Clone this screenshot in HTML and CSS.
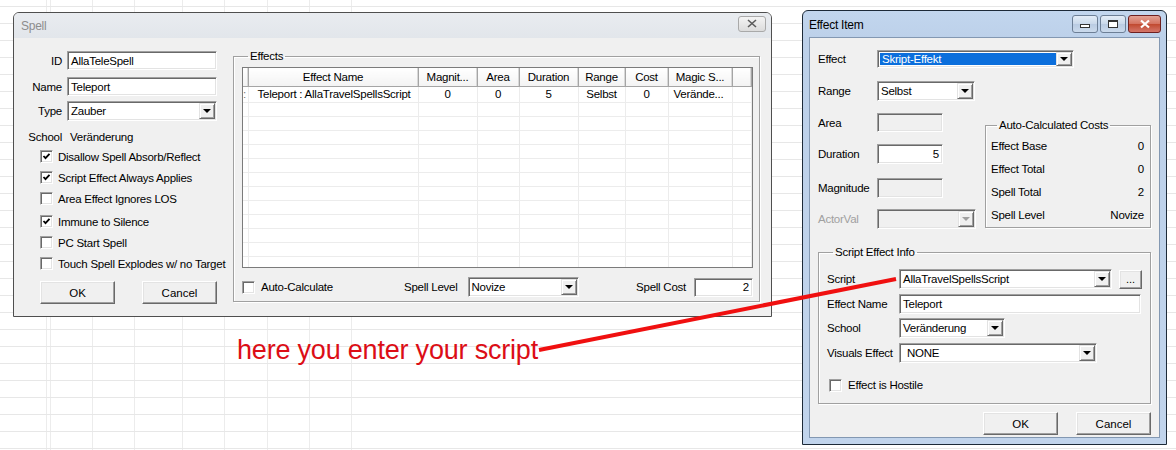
FILE: index.html
```html
<!DOCTYPE html>
<html lang="de">
<head>
    <meta charset="UTF-8">
    <title>Spell</title>
    <link rel="stylesheet" href="styles.css">
</head>
<body>
<div id="desk">

    <!-- Spell dialog (inactive) -->
    <div class="win spell">
        <div class="titlebar">
            <span class="title">Spell</span>
            <span class="x-btn"><svg width="10" height="9" viewBox="0 0 10 9"><path d="M1 1L9 8M9 1L1 8" stroke="#5c5c5c" stroke-width="1.6"/></svg></span>
        </div>
        <div class="client">
            <div class="left-col">
                <div class="frow"><label>ID</label><div class="edit w150">AllaTeleSpell</div></div>
                <div class="frow gap7"><label>Name</label><div class="edit w150">Teleport</div></div>
                <div class="frow gap5"><label>Type</label><div class="combo w150 h20"><span class="val">Zauber</span><span class="drop"></span></div></div>
                <div class="frow school"><label>School</label><span>Veränderung</span></div>
                <div class="checks">
                    <div class="chk"><span class="box on"></span>Disallow Spell Absorb/Reflect</div>
                    <div class="chk"><span class="box on"></span>Script Effect Always Applies</div>
                    <div class="chk"><span class="box"></span>Area Effect Ignores LOS</div>
                    <div class="chk gap2"><span class="box on"></span>Immune to Silence</div>
                    <div class="chk"><span class="box"></span>PC Start Spell</div>
                    <div class="chk"><span class="box"></span>Touch Spell Explodes w/ no Target</div>
                </div>
                <div class="btns">
                    <button class="btn">OK</button>
                    <button class="btn">Cancel</button>
                </div>
            </div>

            <fieldset class="effects">
                <legend>Effects</legend>
                <div class="listview">
                    <table>
                        <colgroup>
                            <col style="width:5px"><col style="width:170px"><col style="width:59px"><col style="width:42px">
                            <col style="width:59px"><col style="width:47px"><col style="width:43px"><col style="width:64px"><col>
                        </colgroup>
                        <thead>
                            <tr><th></th><th>Effect Name</th><th>Magnit...</th><th>Area</th><th>Duration</th><th>Range</th><th>Cost</th><th>Magic S...</th><th></th></tr>
                        </thead>
                        <tbody>
                            <tr class="first"><td class="cut">:</td><td class="name">Teleport : AllaTravelSpellsScript</td><td>0</td><td>0</td><td>5</td><td>Selbst</td><td>0</td><td class="lft">Verände...</td><td></td></tr>
                            <tr><td></td><td></td><td></td><td></td><td></td><td></td><td></td><td></td><td></td></tr>
                            <tr><td></td><td></td><td></td><td></td><td></td><td></td><td></td><td></td><td></td></tr>
                            <tr><td></td><td></td><td></td><td></td><td></td><td></td><td></td><td></td><td></td></tr>
                            <tr><td></td><td></td><td></td><td></td><td></td><td></td><td></td><td></td><td></td></tr>
                            <tr><td></td><td></td><td></td><td></td><td></td><td></td><td></td><td></td><td></td></tr>
                            <tr><td></td><td></td><td></td><td></td><td></td><td></td><td></td><td></td><td></td></tr>
                            <tr><td></td><td></td><td></td><td></td><td></td><td></td><td></td><td></td><td></td></tr>
                            <tr><td></td><td></td><td></td><td></td><td></td><td></td><td></td><td></td><td></td></tr>
                            <tr><td></td><td></td><td></td><td></td><td></td><td></td><td></td><td></td><td></td></tr>
                            <tr><td></td><td></td><td></td><td></td><td></td><td></td><td></td><td></td><td></td></tr>
                            <tr><td></td><td></td><td></td><td></td><td></td><td></td><td></td><td></td><td></td></tr>
                            <tr><td></td><td></td><td></td><td></td><td></td><td></td><td></td><td></td><td></td></tr>
                        </tbody>
                    </table>
                </div>
                <div class="bottom-row">
                    <div class="chk auto"><span class="box"></span>Auto-Calculate</div>
                    <span class="lbl-level">Spell Level</span>
                    <div class="combo w111 h20"><span class="val">Novize</span><span class="drop"></span></div>
                    <span class="lbl-cost">Spell Cost</span>
                    <div class="edit w59 num">2</div>
                </div>
            </fieldset>
        </div>
    </div>

    <!-- Effect Item dialog (active) -->
    <div class="win item">
        <div class="titlebar">
            <span class="title">Effect Item</span>
            <div class="caps">
                <span class="cap min"><i></i></span>
                <span class="cap max"><i></i></span>
                <span class="cap close"><svg width="12" height="10" viewBox="0 0 12 10"><path d="M2 1.5L10 8.5M10 1.5L2 8.5" stroke="#fff" stroke-width="2.2"/></svg></span>
            </div>
        </div>
        <div class="client">
            <div class="irow"><label>Effect</label><div class="combo sel w197 h18"><span class="val">Skript-Effekt</span><span class="drop"></span></div></div>
            <div class="irow mt13"><label>Range</label><div class="combo w98 h20"><span class="val">Selbst</span><span class="drop"></span></div></div>
            <div class="mid">
                <div class="mid-left">
                    <div class="irow"><label>Area</label><div class="edit dis w66"></div></div>
                    <div class="irow mt12"><label>Duration</label><div class="edit num w66 h20">5</div></div>
                    <div class="irow mt14"><label>Magnitude</label><div class="edit dis w66 h20"></div></div>
                    <div class="irow mt11"><label class="grey">ActorVal</label><div class="combo dis w99 h20"><span class="val"></span><span class="drop"></span></div></div>
                </div>
                <fieldset class="costs">
                    <legend>Auto-Calculated Costs</legend>
                    <div class="crow"><span>Effect Base</span><span>0</span></div>
                    <div class="crow"><span>Effect Total</span><span>0</span></div>
                    <div class="crow"><span>Spell Total</span><span>2</span></div>
                    <div class="crow"><span>Spell Level</span><span>Novize</span></div>
                </fieldset>
            </div>
            <fieldset class="sinfo">
                <legend>Script Effect Info</legend>
                <div class="srow"><label>Script</label><div class="combo w213 h20"><span class="val">AllaTravelSpellsScript</span><span class="drop"></span></div><button class="btn dots">...</button></div>
                <div class="srow mt5"><label>Effect Name</label><div class="edit w242 h20">Teleport</div></div>
                <div class="srow mt4"><label>School</label><div class="combo w106 h20"><span class="val">Veränderung</span><span class="drop"></span></div></div>
                <div class="srow mt5"><label>Visuals Effect</label><div class="combo w198 h20"><span class="val pad">NONE</span><span class="drop"></span></div></div>
                <div class="chk hostile"><span class="box"></span>Effect is Hostile</div>
            </fieldset>
            <div class="ibtns">
                <button class="btn">OK</button>
                <button class="btn">Cancel</button>
            </div>
        </div>
    </div>

    <!-- annotation -->
    <div class="note">here you enter your script</div>
    <svg class="arrow" width="1176" height="450" viewBox="0 0 1176 450">
        <line x1="539" y1="350" x2="896" y2="279" stroke="#f01010" stroke-width="4"/>
    </svg>
</div>
</body>
</html>
```

FILE: styles.css
```css
*{
    margin: 0;
    padding: 0;
    box-sizing: border-box;
}
body{
    width: 1176px;
    height: 450px;
    overflow: hidden;
    font-family: "Liberation Sans", Arial, sans-serif;
    font-size: 11.5px;
    letter-spacing: -0.25px;
    color: #000;
}
#desk{
    position: relative;
    width: 1176px;
    height: 450px;
    background-color: #fff;
    background-image:
        linear-gradient(to bottom, #e7e7e7 0, #e7e7e7 1px, transparent 1px),
        linear-gradient(#ececec, #ececec), linear-gradient(#ececec, #ececec),
        linear-gradient(#ececec, #ececec), linear-gradient(#ececec, #ececec),
        linear-gradient(#ececec, #ececec), linear-gradient(#ececec, #ececec),
        linear-gradient(#ececec, #ececec), linear-gradient(#ececec, #ececec),
        linear-gradient(#ececec, #ececec);
    background-size: 100% 17px, 1px 100%, 1px 100%, 1px 100%, 1px 100%, 1px 100%, 1px 100%, 1px 100%, 1px 100%, 1px 100%;
    background-repeat: repeat, no-repeat, no-repeat, no-repeat, no-repeat, no-repeat, no-repeat, no-repeat, no-repeat, no-repeat;
    background-position: 0 6px, 46px 0, 50px 0, 92px 0, 134px 0, 182px 0, 224px 0, 267px 0, 309px 0, 351px 0;
}

/* ---------- windows ---------- */
.win{
    position: absolute;
    display: flex;
    flex-direction: column;
}
.titlebar{
    display: flex;
    align-items: center;
    flex: none;
}
.client{
    background: #f0f0f0;
    flex: 1;
}
label{
    white-space: nowrap;
}

.spell{
    left: 13px;
    top: 12px;
    width: 759px;
    height: 305px;
    border: 1px solid #4f4f4f;
    border-radius: 6px 6px 0 0;
    background: #f0f0f0;
}
.spell .titlebar{
    height: 25px;
    padding-left: 7px;
    background: linear-gradient(#e9ecf0, #e2e6eb);
    border-radius: 5px 5px 0 0;
}
.spell .title{
    color: #8d8d8d;
    font-size: 12px;
    flex: 1;
}
.x-btn{
    width: 28px;
    height: 16px;
    margin-right: 5px;
    margin-top: -4px;
    border: 1px solid #a9a9a9;
    border-radius: 3px;
    background: linear-gradient(#f4f4f4, #dcdcdc);
    display: flex;
    align-items: center;
    justify-content: center;
}
.spell .client{
    display: flex;
    padding-top: 11px;
}
.left-col{
    width: 219px;
    padding-top: 2px;
}
.frow{
    display: flex;
    align-items: center;
    gap: 5px;
}
.frow label{
    width: 48px;
    text-align: right;
}
.gap7{ margin-top: 7px; }
.gap5{ margin-top: 5px; }
.frow.school{
    margin-top: 8px;
    height: 16px;
    gap: 8px;
}
.checks{
    padding-left: 26px;
    margin-top: 1px;
}
.chk{
    display: flex;
    align-items: center;
    gap: 5px;
    height: 21px;
    white-space: nowrap;
}
.chk.gap2{ margin-top: 2px; }
.btns{
    display: flex;
    gap: 27px;
    padding-left: 26px;
    margin-top: 7px;
}
.btns .btn{
    width: 75px;
    height: 23px;
}

/* ---------- controls ---------- */
.edit{
    height: 19px;
    background: #fff;
    border: 1px solid;
    border-color: #a0a0a0 #fff #fff #a0a0a0;
    box-shadow: inset 1px 1px #696969, inset -1px -1px #e3e3e3;
    padding: 0 3px;
    display: flex;
    align-items: center;
    white-space: nowrap;
    overflow: hidden;
}
.edit.num{
    justify-content: flex-end;
}
.edit.dis{
    background: #f0f0f0;
}
.combo{
    height: 19px;
    display: flex;
    background: #fff;
    border: 1px solid;
    border-color: #a0a0a0 #fff #fff #a0a0a0;
    box-shadow: inset 1px 1px #696969, inset -1px -1px #e3e3e3;
    padding: 1px;
}
.combo .val{
    flex: 1;
    display: flex;
    align-items: center;
    padding-left: 2px;
    white-space: nowrap;
    overflow: hidden;
}
.combo .val.pad{
    padding-left: 6px;
}
.combo.sel .val{
    background: #0c6fdc;
    color: #fff;
    margin: 1px 0 1px 1px;
}
.combo.dis{
    background: #f0f0f0;
}
.drop{
    width: 16px;
    flex: none;
    background: #f0f0f0;
    border: 1px solid;
    border-color: #e3e3e3 #696969 #696969 #e3e3e3;
    box-shadow: inset 1px 1px #fff, inset -1px -1px #a0a0a0;
    display: flex;
    align-items: center;
    justify-content: center;
}
.drop::after{
    content: "";
    border-left: 4px solid transparent;
    border-right: 4px solid transparent;
    border-top: 4px solid #000;
}
.combo.dis .drop::after{
    border-top-color: #a0a0a0;
}
.btn{
    font: inherit;
    color: #000;
    background: #f0f0f0;
    border: 1px solid;
    border-color: #fff #696969 #696969 #fff;
    box-shadow: inset -1px -1px #a0a0a0, inset 1px 1px #e3e3e3;
}
.box{
    width: 13px;
    height: 13px;
    flex: none;
    background: #fff;
    border: 1px solid;
    border-color: #a0a0a0 #fff #fff #a0a0a0;
    box-shadow: inset 1px 1px #696969, inset -1px -1px #e3e3e3;
}
.box.on{
    background: #fff url("data:image/svg+xml,%3Csvg xmlns='http://www.w3.org/2000/svg' width='11' height='11'%3E%3Cpath d='M2.5 5L4.5 7.2L8.5 2.8' stroke='black' stroke-width='1.8' fill='none'/%3E%3C/svg%3E") no-repeat center;
}
fieldset{
    border: 1px solid #a0a0a0;
    box-shadow: inset 1px 1px #fff, 1px 1px #fff;
    min-width: 0;
}
legend{
    margin-left: 6px;
    padding: 0 2px;
    line-height: 14px;
}

.w150{ width: 150px; }
.w111{ width: 111px; }
.w59{ width: 59px; }
.w197{ width: 197px; }
.w98{ width: 98px; }
.w99{ width: 99px; }
.w66{ width: 66px; }
.w213{ width: 213px; }
.w242{ width: 242px; }
.w106{ width: 106px; }
.w198{ width: 198px; }
.h18{ height: 18px; }
.h20{ height: 20px; }

/* ---------- effects list ---------- */
.effects{
    width: 527px;
    height: 253px;
    margin-left: 0;
    padding: 4px 6px 0 8px;
}
.listview{
    height: 201px;
    border: 1px solid #7b7b7b;
    background: #fff;
    overflow: hidden;
}
.listview table{
    width: 100%;
    table-layout: fixed;
    border-collapse: collapse;
}
.listview th{
    height: 18px;
    font-weight: normal;
    text-align: center;
    white-space: nowrap;
    overflow: hidden;
    background: linear-gradient(#fff, #f3f3f3);
    border-right: 1px solid #a5a5a5;
    border-bottom: 1px solid #a5a5a5;
    box-shadow: inset -1px 0 #d8d8d8;
}
.listview td{
    height: 14px;
    text-align: center;
    white-space: nowrap;
    overflow: hidden;
    border-right: 1px solid #ececec;
    border-bottom: 1px solid #ececec;
    line-height: 13px;
}
.listview tr.first td{
    height: 16px;
}
.listview td.name{
    text-align: left;
    padding-left: 9px;
}
.listview td.lft{
    text-align: left;
    padding-left: 5px;
}
.listview td.cut{
    text-align: left;
    color: #777;
}
.bottom-row{
    display: flex;
    align-items: center;
    height: 20px;
    margin-top: 9px;
}
.chk.auto{
    width: 162px;
    gap: 6px;
}
.lbl-level{
    margin-right: 10px;
}
.lbl-cost{
    margin-left: auto;
    margin-right: 8px;
}

/* ---------- effect item ---------- */
.item{
    left: 802px;
    top: 10px;
    width: 365px;
    height: 435px;
    border: 1px solid #1d2a38;
    border-radius: 6px 6px 0 0;
    background: linear-gradient(#c2d6ee, #bcd0e9 30px, #c1d4ec);
    padding: 0 6px 6px 6px;
}
.item .titlebar{
    height: 26px;
    padding-left: 0;
}
.item .title{
    flex: 1;
    font-size: 12px;
    color: #000;
    padding-top: 2px;
}
.caps{
    display: flex;
    gap: 2px;
    align-self: flex-start;
    margin-top: 4px;
    margin-right: -1px;
}
.cap{
    height: 18px;
    border: 1px solid #6d7f96;
    border-radius: 3px;
    display: flex;
    align-items: center;
    justify-content: center;
    background: linear-gradient(#e4edf7, #c9d8ea 50%, #b9cbe2 50%, #cbdaec);
}
.cap.min{ width: 26px; }
.cap.max{ width: 26px; }
.cap.close{
    width: 33px;
    border-color: #6e2020;
    background: linear-gradient(#e3a295, #d4715e 50%, #c0482e 50%, #d4766a);
}
.cap.min i{
    width: 10px;
    height: 4px;
    margin-top: 4px;
    border: 1px solid #333;
    background: #fff;
}
.cap.max i{
    width: 10px;
    height: 8px;
    border: 1px solid #333;
    border-top-width: 2px;
    background: #fff;
}
.item .client{
    border: 1px solid #8398b2;
    padding: 12px 8px 0 8px;
    display: flex;
    flex-direction: column;
}
.irow{
    display: flex;
    align-items: center;
}
.irow label{
    width: 59px;
}
.irow label.grey{
    color: #a0a0a0;
}
.mt13{ margin-top: 13px; }
.mt12{ margin-top: 12px; }
.mt14{ margin-top: 14px; }
.mt11{ margin-top: 11px; }
.mt5{ margin-top: 5px; }
.mt4{ margin-top: 4px; }
.mid{
    display: flex;
    margin-top: 12px;
}
.mid-left{
    width: 167px;
}
.costs{
    width: 166px;
    height: 110px;
    margin-top: 5px;
    padding: 2px 6px 0 5px;
}
.crow{
    display: flex;
    justify-content: space-between;
    align-items: center;
    height: 23px;
}
.sinfo{
    width: 333px;
    height: 159px;
    margin-top: 16px;
    padding: 10px 8px 0 8px;
}
.srow{
    display: flex;
    align-items: center;
}
.srow label{
    width: 72px;
}
.dots{
    width: 23px;
    height: 19px;
    margin-left: 7px;
    font-size: 11px;
}
.chk.hostile{
    margin-top: 14px;
    height: 16px;
    gap: 6px;
    padding-left: 2px;
}
.ibtns{
    display: flex;
    justify-content: flex-end;
    gap: 18px;
    margin-top: 8px;
    padding-right: 0;
}
.ibtns .btn{
    width: 75px;
    height: 23px;
}

/* ---------- annotation ---------- */
.note{
    position: absolute;
    left: 237px;
    top: 337px;
    font-family: "Liberation Sans", Arial, sans-serif;
    font-size: 27px;
    line-height: 27px;
    letter-spacing: -0.2px;
    color: #dc0d16;
    white-space: nowrap;
}
.arrow{
    position: absolute;
    left: 0;
    top: 0;
    pointer-events: none;
}
```
